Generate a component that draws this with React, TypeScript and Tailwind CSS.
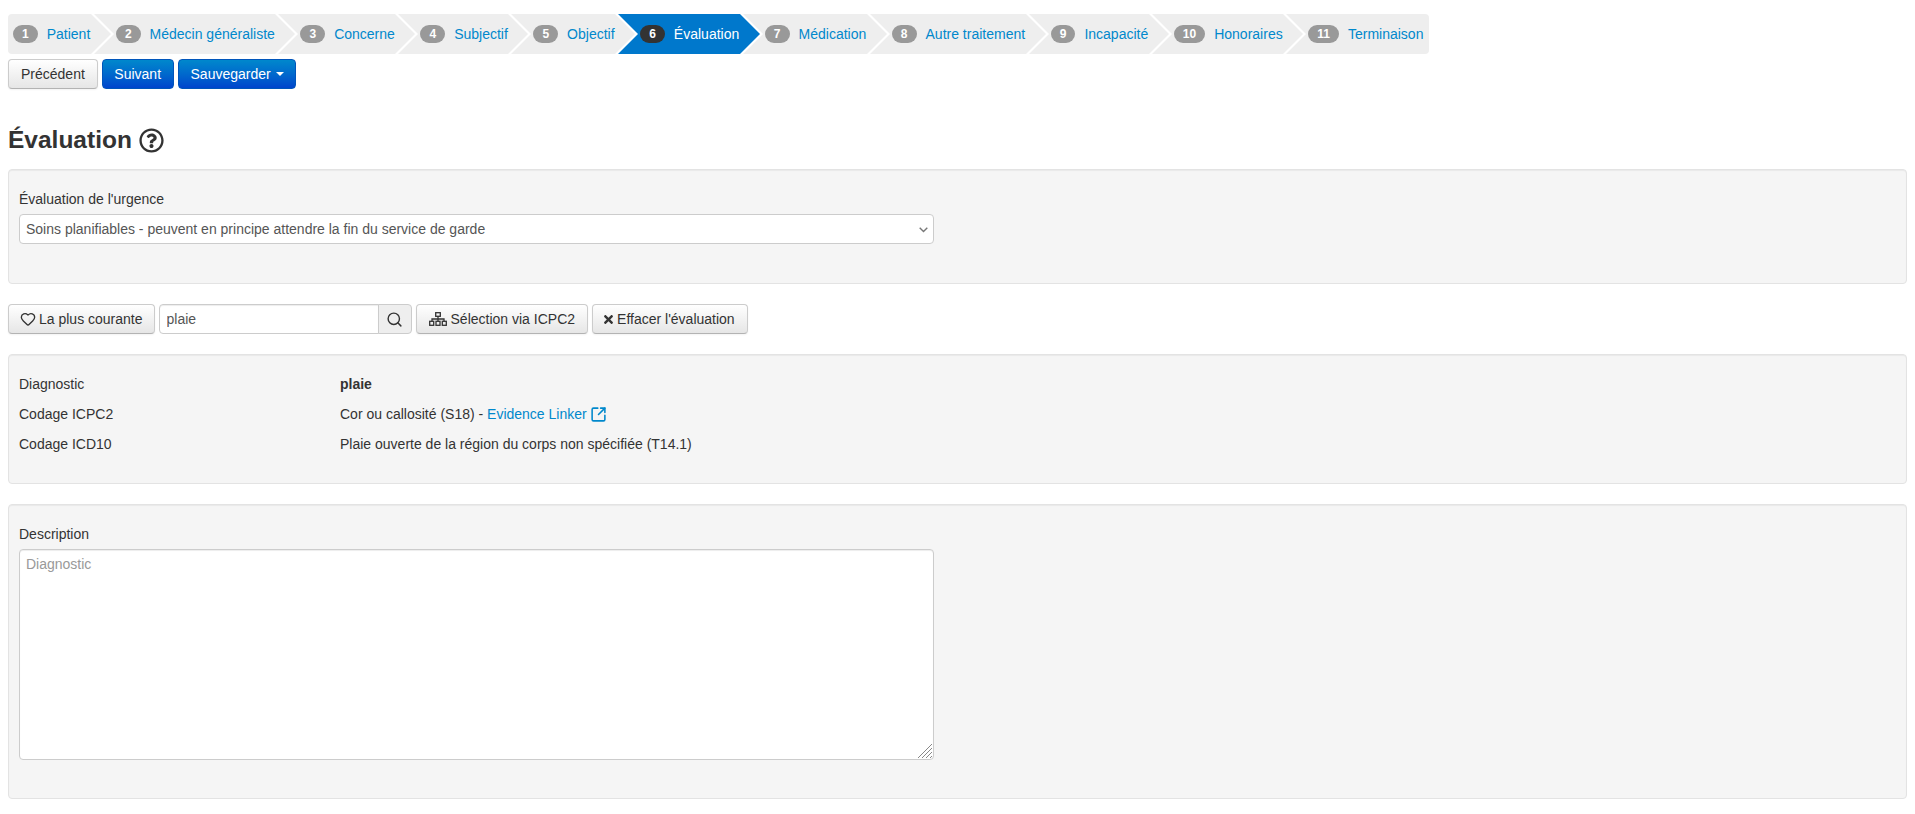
import { FaRegQuestionCircle, FaTimes } from "react-icons/fa";
import { Heart, Search, SquareArrowOutUpRight } from "lucide-react";

const steps = ["Patient", "Médecin généraliste", "Concerne", "Subjectif", "Objectif", "Évaluation", "Médication", "Autre traitement", "Incapacité", "Honoraires", "Terminaison"];
const activeStep = 5;

function Wizard() {
  return (
    <ol className="flex h-10 w-fit overflow-hidden rounded bg-[#eeeeee]">
      {steps.map((label, i) => {
        const active = i === activeStep;
        return (
          <li
            key={label}
            className={`relative flex items-center gap-[9px] ${i === 0 ? "pl-[5px]" : "pl-6"} ${i === steps.length - 1 ? "pr-[6px]" : "pr-[1.6px]"} ${active ? "bg-[#0078cc] text-white" : "text-[#0088cc]"}`}
          >
            <span className={`rounded-[10px] px-[9px] py-[3px] text-xs leading-3 font-bold text-white ${active ? "bg-[#333333]" : "bg-[#999999]"}`}>{i + 1}</span>
            <span className="relative z-20 whitespace-nowrap">{label}</span>
            {i < steps.length - 1 && (
              <svg width="24" height="40" viewBox="0 0 24 40" className="absolute top-0 left-[calc(100%-1px)] z-10">
                <polygon points="0,0 3,0 23,20 3,40 0,40" fill="#ffffff" />
                <polygon points="0,0 20,20 0,40" fill={active ? "#0078cc" : "#eeeeee"} />
              </svg>
            )}
          </li>
        );
      })}
    </ol>
  );
}

const defaultBtn = "inline-flex h-[30px] items-center rounded border border-[#cccccc] border-b-[#b3b3b3] bg-linear-to-b from-white to-[#e6e6e6] text-[#333333] shadow-[inset_0_1px_0_rgba(255,255,255,0.2),0_1px_2px_rgba(0,0,0,0.05)]";
const primaryBtn = "inline-flex h-[30px] items-center rounded border border-[#0055bb] bg-linear-to-b from-[#0088cc] to-[#0044cc] text-white";

function Well({ className, children }: { className: string; children: React.ReactNode }) {
  return <section className={`rounded border border-[#e3e3e3] bg-[#f5f5f5] px-[10px] shadow-[inset_0_1px_1px_rgba(0,0,0,0.05)] ${className}`}>{children}</section>;
}

function InfoRow({ label, children }: { label: string; children: React.ReactNode }) {
  return (
    <div className="flex h-[30px] items-center">
      <div className="w-[321px]">{label}</div>
      <div>{children}</div>
    </div>
  );
}

export default function App() {
  return (
    <div className="min-h-[814px] bg-white px-2 pt-[14px] font-['Liberation_Sans',Arial,sans-serif] text-sm leading-5 text-[#333333]">
      <Wizard />

      <div className="mt-[5px] flex gap-1">
        <button className={`${defaultBtn} px-3`}>Précédent</button>
        <button className={`${primaryBtn} px-[11.5px]`}>Suivant</button>
        <button className={`${primaryBtn} pr-[11px] pl-3`}>
          Sauvegarder
          <span className="ml-[5px] h-0 w-0 border-x-4 border-t-4 border-x-transparent border-t-white"></span>
        </button>
      </div>

      <h1 className="mt-[31px] flex h-10 items-center gap-[7px] text-[24.5px] font-bold">
        Évaluation
        <FaRegQuestionCircle className="h-[25px] w-[25px]" />
      </h1>

      <Well className="mt-[9px] h-[115px] pt-[19px]">
        <label className="mb-[5px] block">Évaluation de l'urgence</label>
        <div className="relative w-[915px]">
          <select defaultValue="a" className="h-[30px] w-full appearance-none rounded border border-[#cccccc] bg-white px-[6px] text-[#555555]">
            <option value="a">Soins planifiables - peuvent en principe attendre la fin du service de garde</option>
          </select>
          <svg width="9" height="6" viewBox="0 0 9 6" className="absolute top-[13px] right-[6px] text-[#777777]" fill="none" stroke="currentColor" strokeWidth="1.4">
            <path d="M0.7 0.7 L4.5 4.5 L8.3 0.7" />
          </svg>
        </div>
      </Well>

      <div className="mt-5 flex h-[30px] gap-1">
        <button className={`${defaultBtn} gap-[3px] pr-[11px] pl-3`}>
          <Heart className="-ml-px h-4 w-4" strokeWidth={2} />
          La plus courante
        </button>
        <div className="flex">
          <input defaultValue="plaie" className="h-[30px] w-[220px] rounded-l border border-[#cccccc] bg-white px-[7px] text-[#555555] shadow-[inset_0_1px_1px_rgba(0,0,0,0.075)]" />
          <button className="-ml-px flex h-[30px] w-[34px] items-center justify-center rounded-r border border-[#cccccc] bg-[#eeeeee]">
            <Search className="h-[17px] w-[17px]" strokeWidth={2} />
          </button>
        </div>
        <button className={`${defaultBtn} gap-1 px-3`}>
          <svg width="18" height="14" viewBox="0 0 18 14" fill="none" stroke="currentColor" strokeWidth="1.3">
            <rect x="6.7" y="0.7" width="4.6" height="3.6" />
            <path d="M9 4.3 V9 M3 9 V7 H15 V9" />
            <rect x="0.7" y="9.3" width="4" height="4" />
            <rect x="7" y="9.3" width="4" height="4" />
            <rect x="13.3" y="9.3" width="4" height="4" />
          </svg>
          Sélection via ICPC2
        </button>
        <button className={`${defaultBtn} gap-[2px] pr-3 pl-[9px]`}>
          <FaTimes className="h-[13px] w-[13px]" />
          Effacer l'évaluation
        </button>
      </div>

      <Well className="mt-5 h-[130px] pt-[14px]">
        <InfoRow label="Diagnostic"><b>plaie</b></InfoRow>
        <InfoRow label="Codage ICPC2">
          <span className="flex items-center gap-[3px]">
            <span>Cor ou callosité (S18) - <a className="text-[#0088cc]">Evidence Linker</a></span>
            <SquareArrowOutUpRight className="h-[17px] w-[17px] text-[#0088cc]" strokeWidth={2.2} />
          </span>
        </InfoRow>
        <InfoRow label="Codage ICD10">Plaie ouverte de la région du corps non spécifiée (T14.1)</InfoRow>
      </Well>

      <Well className="mt-5 h-[295px] pt-[19px]">
        <label className="mb-[5px] block">Description</label>
        <div className="relative w-[915px]">
          <textarea placeholder="Diagnostic" className="block h-[211px] w-full resize-none rounded border border-[#cccccc] bg-white px-[6px] py-1 text-[#555555] shadow-[inset_0_1px_1px_rgba(0,0,0,0.075)] placeholder:text-[#999999]" />
          <svg width="14" height="14" viewBox="0 0 14 14" className="pointer-events-none absolute right-[2px] bottom-[2px] text-[#888888]" stroke="currentColor" strokeWidth="1">
            <path d="M0 14 L14 0 M4 14 L14 4 M8 14 L14 8 M12 14 L14 12" />
          </svg>
        </div>
      </Well>
    </div>
  );
}
